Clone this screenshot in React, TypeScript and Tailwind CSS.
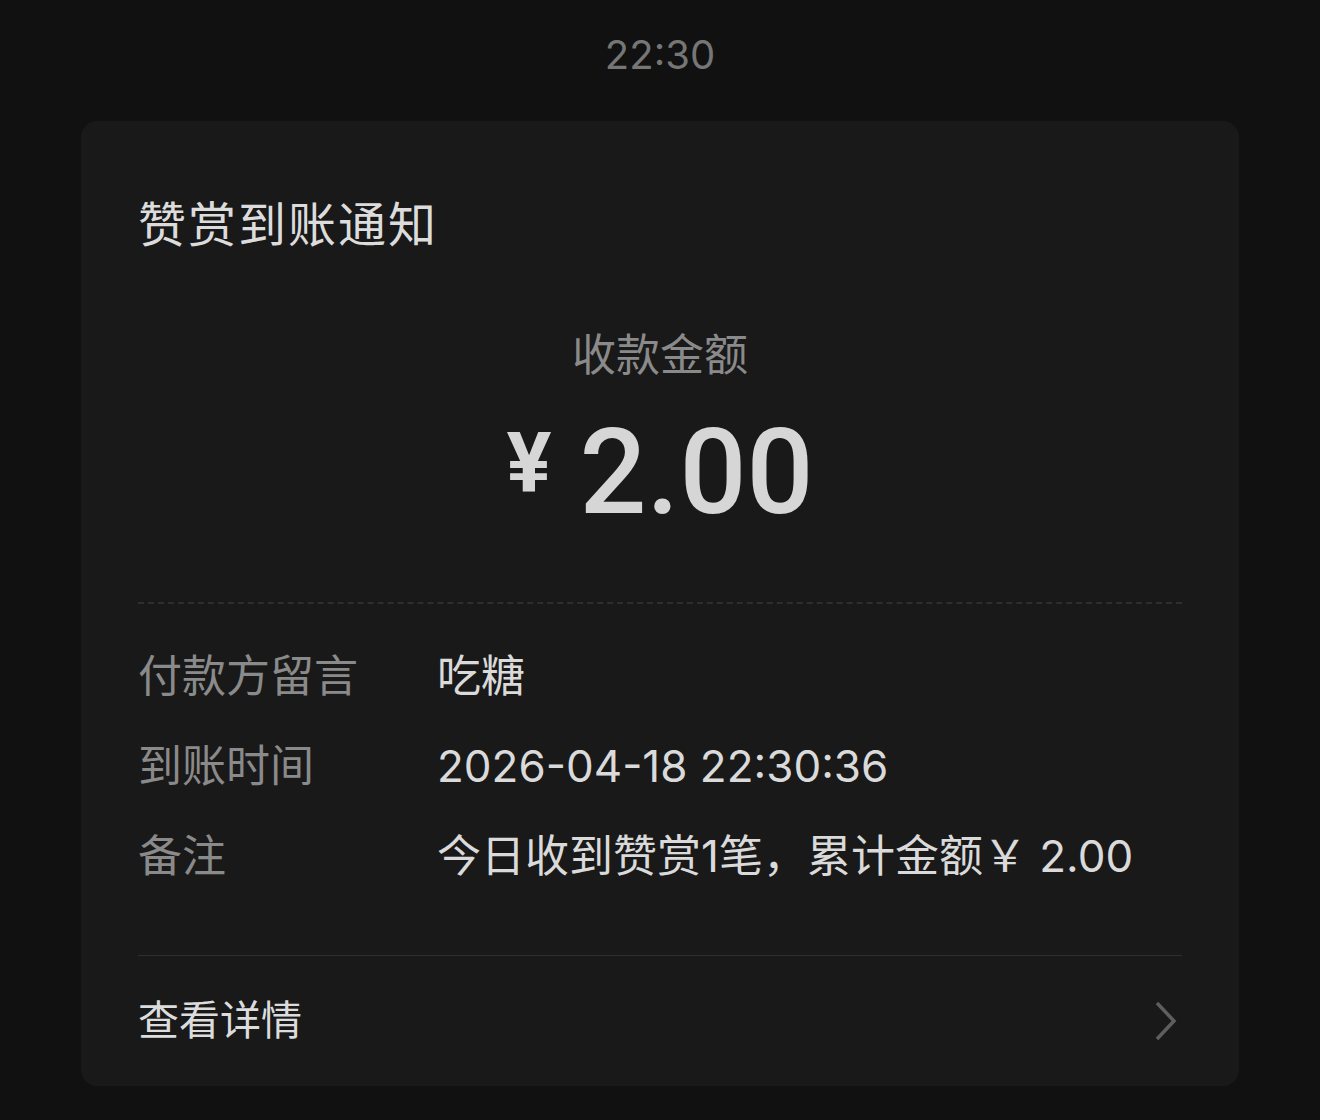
import React from "react";

const FONT = { fontFamily: '"Inter", "Noto Sans CJK SC", sans-serif' };

interface Row {
  label: string;
  value: string;
}

const rows: Row[] = [
  { label: "付款方留言", value: "吃糖" },
  { label: "到账时间", value: "2026-04-18 22:30:36" },
  { label: "备注", value: "今日收到赞赏1笔，累计金额￥ 2.00" },
];

export default function App() {
  return (
    <div className="min-h-[1120px] w-full bg-[#111111]" style={FONT}>
      {/* timestamp */}
      <div className="flex h-[121px] items-start justify-center pt-[30px]">
        <span className="text-[40px] leading-[50px] text-[#767676]">22:30</span>
      </div>

      <div className="mx-auto w-[1158px] rounded-[16px] bg-[#191919] px-[57px]">
        <div className="pt-[74px] text-[48px] leading-[60px] tracking-[2px] text-[#dcdcdc]">
          赞赏到账通知
        </div>

        <div className="mt-[72px] text-center text-[44px] leading-[56px] text-[#8a8a8a]">
          收款金额
        </div>

        <div className="mt-[25px] flex h-[130px] items-center justify-center text-[#d6d6d6]">
          <span className="mr-[28px] mt-[-18px] font-['Roboto'] text-[84px] font-bold">¥</span>
          <span className="font-['Roboto'] text-[118px] font-medium leading-none">2.00</span>
        </div>

        <div className="mt-[64px] border-t-2 border-dashed border-[#2e2e2e]" />

        <div className="pt-[27px]">
          {rows.map((r) => (
            <div key={r.label} className="flex h-[90px] items-center text-[44px]">
              <span className="w-[299px] shrink-0 text-[#8a8a8a]">{r.label}</span>
              <span className="text-[#dadada]">{r.value}</span>
            </div>
          ))}
        </div>

        <div className="mt-[54px] border-t border-[#2f2f2f]" />

        <div className="flex h-[130px] items-center justify-between">
          <span className="text-[41px] text-[#dcdcdc]">查看详情</span>
          <svg width="24" height="40" viewBox="0 0 24 40" className="mr-[4px]">
            <polyline points="3,2 20,20 3,38" fill="none" stroke="#5e5e5e" strokeWidth="3.5" />
          </svg>
        </div>
      </div>
    </div>
  );
}
